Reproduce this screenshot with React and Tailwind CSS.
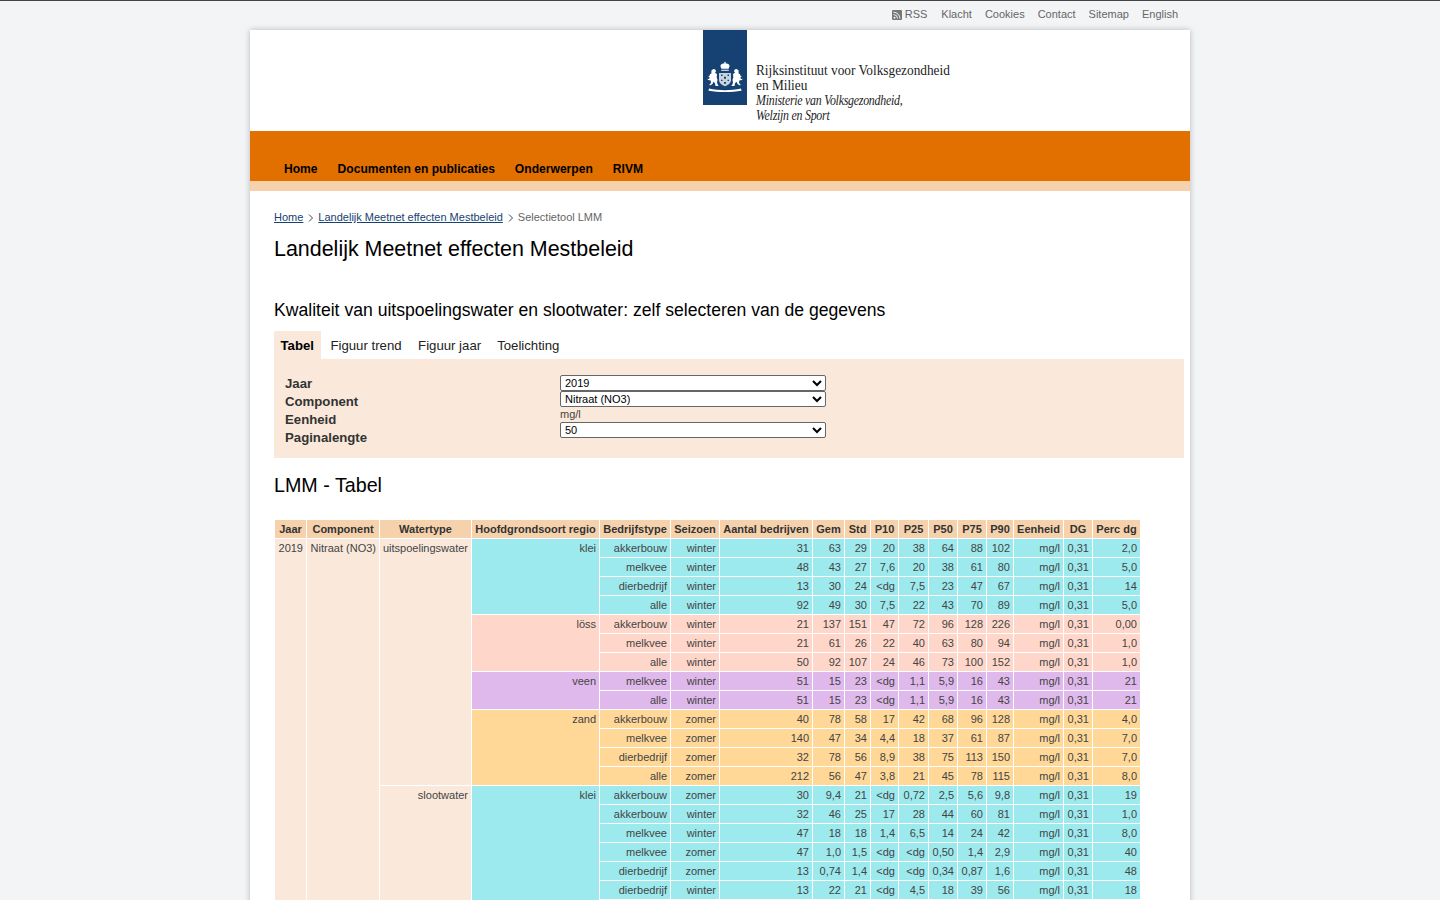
import React from 'react';

const topLinks = ['Klacht', 'Cookies', 'Contact', 'Sitemap', 'English'];
const navItems = ['Home', 'Documenten en publicaties', 'Onderwerpen', 'RIVM'];
const tabs = ['Figuur trend', 'Figuur jaar', 'Toelichting'];
const headers = ['Jaar', 'Component', 'Watertype', 'Hoofdgrondsoort regio', 'Bedrijfstype', 'Seizoen', 'Aantal bedrijven', 'Gem', 'Std', 'P10', 'P25', 'P50', 'P75', 'P90', 'Eenheid', 'DG', 'Perc dg'];
const colWidths = ['w-[32px]', 'w-[73px]', 'w-[92px]', 'w-[128px]', 'w-[71px]', 'w-[49px]', 'w-[93px]', 'w-[32px]', 'w-[26px]', 'w-[28px]', 'w-[30px]', 'w-[29px]', 'w-[29px]', 'w-[27px]', 'w-[50px]', 'w-[29px]', 'w-[48px]'];

// Rows grouped per watertype and per soil region, bg is the region colour.
const groups = [
    {
        water: 'uitspoelingswater',
        regions: [
            {
                name: 'klei',
                bg: 'bg-[#9ceaee]',
                rows: [
                    ['akkerbouw', 'winter', '31', '63', '29', '20', '38', '64', '88', '102', '2,0'],
                    ['melkvee', 'winter', '48', '43', '27', '7,6', '20', '38', '61', '80', '5,0'],
                    ['dierbedrijf', 'winter', '13', '30', '24', '<dg', '7,5', '23', '47', '67', '14'],
                    ['alle', 'winter', '92', '49', '30', '7,5', '22', '43', '70', '89', '5,0']
                ]
            },
            {
                name: 'löss',
                bg: 'bg-[#ffd7ca]',
                rows: [
                    ['akkerbouw', 'winter', '21', '137', '151', '47', '72', '96', '128', '226', '0,00'],
                    ['melkvee', 'winter', '21', '61', '26', '22', '40', '63', '80', '94', '1,0'],
                    ['alle', 'winter', '50', '92', '107', '24', '46', '73', '100', '152', '1,0']
                ]
            },
            {
                name: 'veen',
                bg: 'bg-[#e0b9ec]',
                rows: [
                    ['melkvee', 'winter', '51', '15', '23', '<dg', '1,1', '5,9', '16', '43', '21'],
                    ['alle', 'winter', '51', '15', '23', '<dg', '1,1', '5,9', '16', '43', '21']
                ]
            },
            {
                name: 'zand',
                bg: 'bg-[#ffd898]',
                rows: [
                    ['akkerbouw', 'zomer', '40', '78', '58', '17', '42', '68', '96', '128', '4,0'],
                    ['melkvee', 'zomer', '140', '47', '34', '4,4', '18', '37', '61', '87', '7,0'],
                    ['dierbedrijf', 'zomer', '32', '78', '56', '8,9', '38', '75', '113', '150', '7,0'],
                    ['alle', 'zomer', '212', '56', '47', '3,8', '21', '45', '78', '115', '8,0']
                ]
            }
        ]
    },
    {
        water: 'slootwater',
        regions: [
            {
                name: 'klei',
                bg: 'bg-[#9ceaee]',
                rows: [
                    ['akkerbouw', 'zomer', '30', '9,4', '21', '<dg', '0,72', '2,5', '5,6', '9,8', '19'],
                    ['akkerbouw', 'winter', '32', '46', '25', '17', '28', '44', '60', '81', '1,0'],
                    ['melkvee', 'winter', '47', '18', '18', '1,4', '6,5', '14', '24', '42', '8,0'],
                    ['melkvee', 'zomer', '47', '1,0', '1,5', '<dg', '<dg', '0,50', '1,4', '2,9', '40'],
                    ['dierbedrijf', 'zomer', '13', '0,74', '1,4', '<dg', '<dg', '0,34', '0,87', '1,6', '48'],
                    ['dierbedrijf', 'winter', '13', '22', '21', '<dg', '4,5', '18', '39', '56', '18'],
                    ['', '', '', '', '', '', '', '', '', '', '']
                ]
            }
        ]
    }
];

const countRows = (g) => g.regions.reduce((n, r) => n + r.rows.length, 0);
const totalRows = groups.reduce((n, g) => n + countRows(g), 0);

const td = 'border border-white px-[3px] py-[2px] text-right align-top';

const Crest = () => (
    <svg viewBox="0 0 44 75" className="w-[44px] h-[75px] block" fill="#fff">
        <g transform="translate(0 2.2) scale(1 .93)">
            {/* crown */}
            <path d="M22 31.500l.8 1.200-.4.7c1.800.2 2.800.7 3.400 1.400.8.800 1 1.900.3 3.100l-.5 1.400h-7.200l-.5-1.400c-.7-1.200-.5-2.300.3-3.100.6-.7 1.600-1.200 3.400-1.400l-.4-.7z" />
            <path d="M18.500 40.500h7l.5 1h-8z" />
            {/* shield */}
            <path d="M16 44h12v7c0 3.500-2.500 5.500-6 7-3.500-1.500-6-3.500-6-7z" fill="#c8d3e0" />
            <path d="M18 45.500h1.500v1.500H18zM24.500 45.500H26v1.500h-1.500zM21 48h2v2h-2zM18 51h1.500v1.500H18zM24.500 51H26v1.500h-1.500zM21 53.500h2v2h-2z" fill="#154273" />
            {/* lions */}
            <path d="M8.500 41l2-1.500 1.800.5.700 2-1 1.500 2 1.500-.3 3.500.8 3-.5 2.500 1 3 1 .8h-3.500l-.5-3-1.500-1.500-1 2.500-2.500 1.500-.7-.8 1.700-2-.3-2.500-2.500-.5-1-1.500 1.800.3.700-1.300-1.500-2 1.500-.3.300-1.700 1.300-.2z" />
            <path d="M35.500 41l-2-1.500-1.800.5-.7 2 1 1.500-2 1.500.3 3.500-.8 3 .5 2.500-1 3-1 .8h3.500l.5-3 1.500-1.500 1 2.500 2.500 1.500.7-.8-1.700-2 .3-2.500 2.500-.5 1-1.500-1.800.3-.7-1.300 1.500-2-1.500-.3-.3-1.700-1.300-.2z" />
            {/* banner */}
            <path d="M6 60.500c5 1.300 10.500 1.800 16 1.800s11-.5 16-1.800l.5 2.500c-5 .9-10.500 1.400-16.500 1.400S10.500 63.900 5.500 63z" />
        </g>
    </svg>
);

const RssIcon = () => (
    <svg viewBox="0 0 10 10" className="w-[10px] h-[10px] mr-[3px] mt-[1px]">
        <rect width="10" height="10" rx="1" fill="#777" />
        <circle cx="2.500" cy="7.700" r="1" fill="#eee" />
        <path d="M1.500 4.600a4 4 0 0 1 4 4M1.500 2.200a6.400 6.400 0 0 1 6.400 6.400" fill="none" stroke="#eee" strokeWidth="1" />
    </svg>
);

const Chevron = () => (
    <svg viewBox="0 0 6 8" className="w-[6px] h-[8px] ml-[5px] mr-1 mt-1 shrink-0">
        <path d="M1 .5L4.500 4 1 7.500" fill="none" stroke="#333" strokeWidth="0.9" />
    </svg>
);

const selectClass = 'block w-[266px] h-4 bg-white border border-[#666] rounded-[2px] text-[11px] leading-[14px] text-black';

export default function App() {
    return (
        <div className="min-h-screen bg-[#f3f4f6] border-t border-[#444] font-['Liberation_Sans',Arial,sans-serif] text-[#444]">
            <div className="w-[940px] mx-auto">
                {/* Top links */}
                <div className="h-[29px] pb-[2px] flex justify-end items-center gap-[13px] pr-3 text-[11px] text-[#666]">
                    <span className="flex items-center mr-[1px]">
                        <RssIcon />
                        RSS
                    </span>
                    {topLinks.map((link) => (
                        <span key={link}>{link}</span>
                    ))}
                </div>

                <div className="bg-white shadow-[0_0_6px_rgba(0,0,0,0.25)]">
                    {/* Logo */}
                    <div className="h-[101px] pl-[453px] flex items-start">
                        <Crestblock />
                        <div className="pl-[9px] pt-[33px] font-['Liberation_Serif',serif] text-[14px] leading-[15px] text-[#222] whitespace-nowrap">
                            <div className="origin-left scale-x-[0.95]">Rijksinstituut voor Volksgezondheid</div>
                            <div className="origin-left scale-x-[0.95]">en Milieu</div>
                            <div className="origin-left scale-x-[0.85] italic tracking-[-0.3px]">Ministerie van Volksgezondheid,</div>
                            <div className="origin-left scale-x-[0.85] italic tracking-[-0.3px]">Welzijn en Sport</div>
                        </div>
                    </div>

                    {/* Nav */}
                    <div className="h-[50px] bg-[#e17000] flex items-end gap-5 pl-[34px] pb-1 text-[12.1px] font-bold leading-[15px] text-black">
                        {navItems.map((item) => (
                            <span key={item}>{item}</span>
                        ))}
                    </div>
                    <div className="h-[10px] bg-[#f6d2ac]" />

                    <div className="pl-6 pr-[6px] pt-[19px] pb-8">
                        {/* Breadcrumb */}
                        <div className="flex text-[11px] leading-[14px]">
                            <a className="text-[#154273] underline">Home</a>
                            <Chevron />
                            <a className="text-[#154273] underline">Landelijk Meetnet effecten Mestbeleid</a>
                            <Chevron />
                            <span className="text-[#666]">Selectietool LMM</span>
                        </div>

                        <h1 className="mt-[11px] text-[21.45px] leading-[28px] text-black">Landelijk Meetnet effecten Mestbeleid</h1>
                        <h2 className="mt-[36px] text-[17.6px] leading-[22px] text-black">Kwaliteit van uitspoelingswater en slootwater: zelf selecteren van de gegevens</h2>

                        {/* Tabs */}
                        <div className="mt-[10px] flex text-[13.2px] leading-[16px] text-[#222]">
                            <span className="bg-[#fae9db] pl-[6.5px] pr-[7.5px] pt-[7px] pb-[5px] font-bold text-black">Tabel</span>
                            <span className="pl-[9px] pr-[8.5px] pt-[7px]">{tabs[0]}</span>
                            <span className="px-2 pt-[7px]">{tabs[1]}</span>
                            <span className="px-2 pt-[7px]">{tabs[2]}</span>
                        </div>

                        {/* Selection form */}
                        <div className="h-[99px] bg-[#fae9db] pt-[16px] pl-[11px] flex">
                            <div className="w-[275px] text-[13.2px] font-bold leading-[18px] text-[#333]">
                                <div>Jaar</div>
                                <div>Component</div>
                                <div>Eenheid</div>
                                <div>Paginalengte</div>
                            </div>
                            <div>
                                <select className={selectClass} defaultValue="2019">
                                    <option>2019</option>
                                </select>
                                <select className={selectClass} defaultValue="Nitraat (NO3)">
                                    <option>Nitraat (NO3)</option>
                                </select>
                                <div className="h-[15px] text-[11px] leading-[15px]">mg/l</div>
                                <select className={selectClass} defaultValue="50">
                                    <option>50</option>
                                </select>
                            </div>
                        </div>

                        <h2 className="mt-[15px] text-[19.7px] leading-[24px] text-black">LMM - Tabel</h2>

                        {/* Data table */}
                        <table className="mt-[22px] w-[866px] table-fixed border-collapse text-[11px] leading-[14px] whitespace-nowrap">
                            <colgroup>
                                {colWidths.map((w, i) => (
                                    <col key={i} className={w} />
                                ))}
                            </colgroup>
                            <thead>
                                <tr className="bg-[#f6d2ac] text-[#333]">
                                    {headers.map((h) => (
                                        <th key={h} className="border border-white px-0 py-[2px] font-bold text-center">
                                            {h}
                                        </th>
                                    ))}
                                </tr>
                            </thead>
                            <tbody>
                                {groups.map((group, gi) =>
                                    group.regions.map((region, ri) =>
                                        region.rows.map((row, i) => (
                                            <tr key={`${gi}-${ri}-${i}`} className="h-[19px]">
                                                {gi === 0 && ri === 0 && i === 0 && (
                                                    <>
                                                        <td rowSpan={totalRows} className={`${td} bg-[#fae9db]`}>
                                                            2019
                                                        </td>
                                                        <td rowSpan={totalRows} className={`${td} bg-[#fae9db]`}>
                                                            Nitraat (NO3)
                                                        </td>
                                                    </>
                                                )}
                                                {ri === 0 && i === 0 && (
                                                    <td rowSpan={countRows(group)} className={`${td} bg-[#fae9db]`}>
                                                        {group.water}
                                                    </td>
                                                )}
                                                {i === 0 && (
                                                    <td rowSpan={region.rows.length} className={`${td} ${region.bg}`}>
                                                        {region.name}
                                                    </td>
                                                )}
                                                {row.slice(0, 10).map((value, c) => (
                                                    <td key={c} className={`${td} ${region.bg}`}>
                                                        {value}
                                                    </td>
                                                ))}
                                                <td className={`${td} ${region.bg}`}>{row[0] && 'mg/l'}</td>
                                                <td className={`${td} ${region.bg}`}>{row[0] && '0,31'}</td>
                                                <td className={`${td} ${region.bg}`}>{row[10]}</td>
                                            </tr>
                                        ))
                                    )
                                )}
                            </tbody>
                        </table>
                    </div>
                </div>
            </div>
        </div>
    );
}

function Crestblock() {
    return (
        <div className="w-[44px] h-[75px] bg-[#154273] shrink-0">
            <Crest />
        </div>
    );
}
